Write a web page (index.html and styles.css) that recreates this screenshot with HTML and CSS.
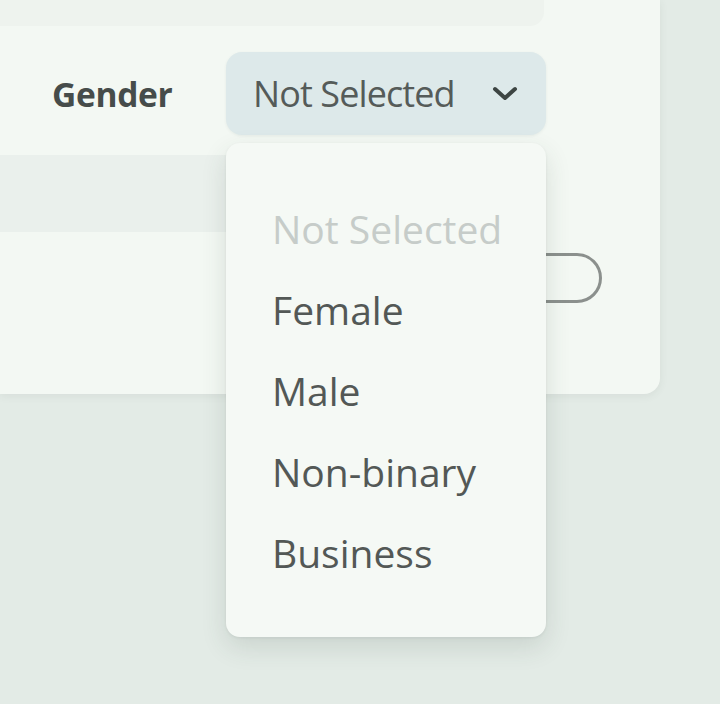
FILE: index.html
```html
<!DOCTYPE html>
<html lang="en">
<head>
<meta charset="utf-8">
<title>Gender select</title>
<link rel="stylesheet" href="styles.css">
</head>
<body>
<div class="card">
  <div class="prev-field"></div>
  <div class="row">
    <span class="label">Gender</span>
    <div class="select">
      <span class="select-value">Not Selected</span>
      <svg class="chevron" width="26" height="16" viewBox="0 0 26 16"><path d="M3 3 L13 12 L23 3" fill="none" stroke="#3d4543" stroke-width="4" stroke-linecap="round" stroke-linejoin="round"/></svg>
    </div>
  </div>
  <div class="input-strip"></div>
  <div class="button-row">
    <div class="pill"></div>
  </div>
</div>
<ul class="menu">
  <li class="item placeholder">Not Selected</li>
  <li class="item">Female</li>
  <li class="item">Male</li>
  <li class="item">Non-binary</li>
  <li class="item">Business</li>
</ul>
</body>
</html>
```

FILE: styles.css
```css
html, body {
  margin: 0;
  padding: 0;
}
body {
  width: 720px;
  height: 704px;
  overflow: hidden;
  background: #e3ebe6;
  font-family: "Open Sans", "Noto Sans", sans-serif;
  position: relative;
}
.card {
  width: 660px;
  height: 394px;
  background: #f3f8f3;
  border-radius: 0 0 16px 0;
  box-shadow: 0 2px 8px rgba(60, 80, 70, 0.08);
  display: flex;
  flex-direction: column;
}
.prev-field {
  width: 544px;
  height: 26px;
  background: #eef3ee;
  border-radius: 0 0 14px 0;
  flex: none;
}
.row {
  margin-top: 26px;
  height: 83px;
  display: flex;
  align-items: center;
  flex: none;
}
.label {
  width: 226px;
  flex: none;
  padding-left: 52px;
  box-sizing: border-box;
  font-weight: 700;
  font-size: 33.5px;
  color: #464c4a;
  letter-spacing: -0.3px;
}
.select {
  width: 320px;
  height: 83px;
  flex: none;
  box-sizing: border-box;
  background: #dde9ea;
  border-radius: 16px;
  display: flex;
  align-items: center;
  padding-left: 27px;
  padding-right: 28px;
  box-shadow: 0 1px 3px rgba(60, 90, 90, 0.08);
}
.select-value {
  flex: 1;
  font-size: 36px;
  letter-spacing: -0.9px;
  color: #555b59;
}
.chevron {
  display: block;
}
.input-strip {
  margin-top: 20px;
  width: 546px;
  height: 77px;
  background: #eaf0ec;
  flex: none;
}
.button-row {
  margin-top: 21px;
  height: 50px;
  display: flex;
  flex: none;
}
.pill {
  margin-left: 440px;
  width: 162px;
  height: 50px;
  box-sizing: border-box;
  border: 3px solid #8b908d;
  border-radius: 25px;
}
.menu {
  position: absolute;
  left: 226px;
  top: 143px;
  width: 320px;
  height: 494px;
  box-sizing: border-box;
  margin: 0;
  padding: 45px 0 0 46px;
  list-style: none;
  background: #f5f9f5;
  border-radius: 14px;
  box-shadow: 0 10px 26px rgba(50, 70, 60, 0.14), 0 1px 3px rgba(50, 70, 60, 0.08);
}
.item {
  font-size: 39px;
  line-height: 81px;
  height: 81px;
  color: #535856;
}
.item.placeholder {
  color: #c6ccc9;
}
```
